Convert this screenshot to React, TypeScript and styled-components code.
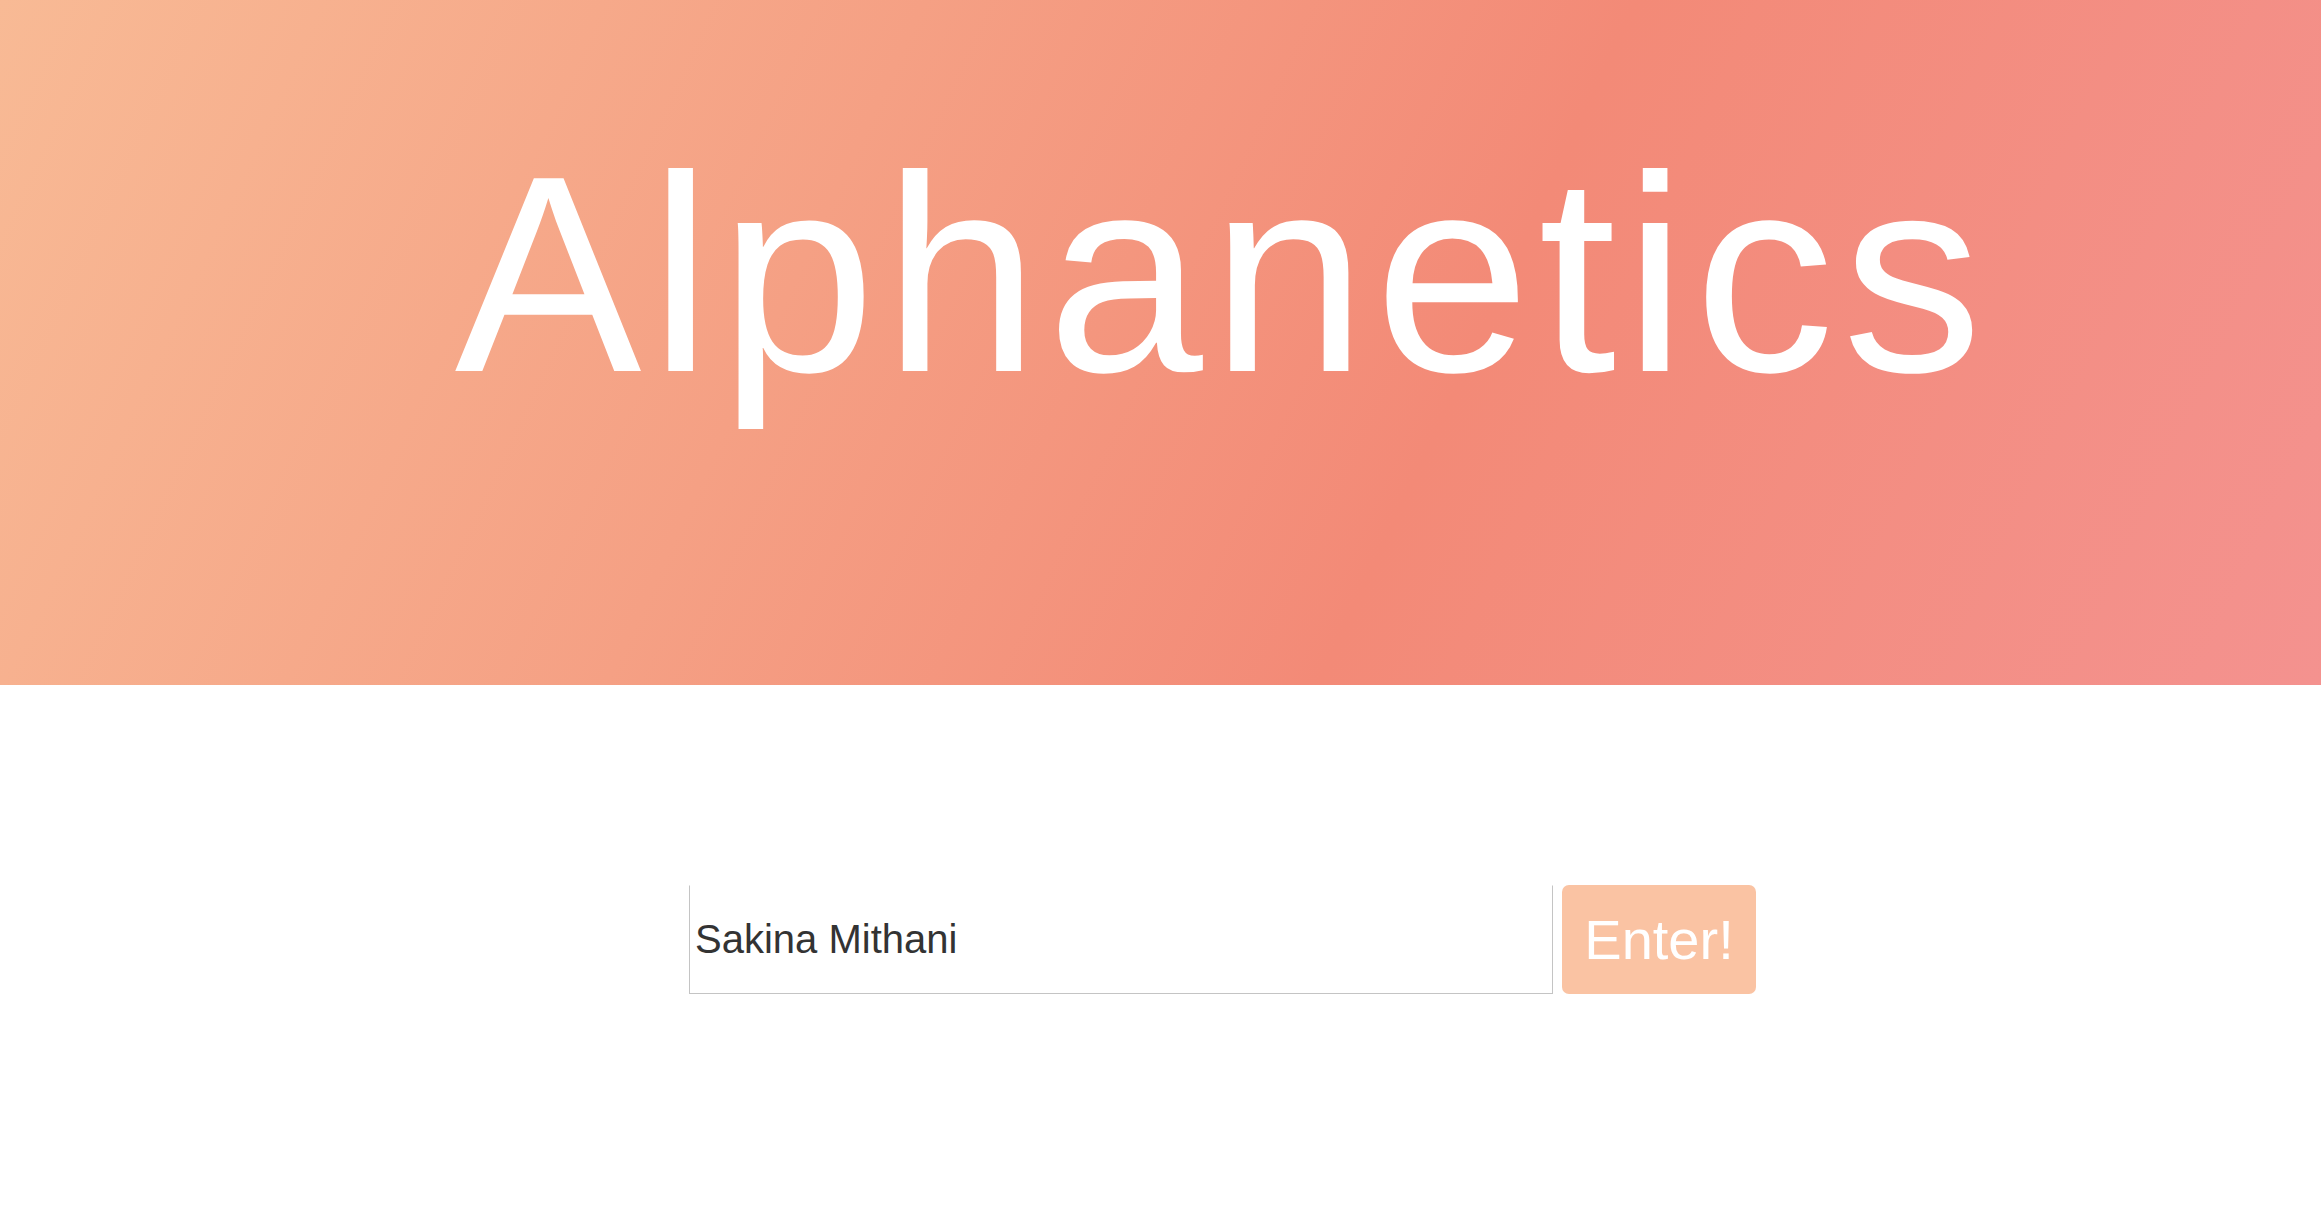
import React, { useState } from "react";
import styled, { createGlobalStyle } from "styled-components";

const Global = createGlobalStyle`
  html, body { margin: 0; padding: 0; background: #ffffff; }
  body { font-family: "Liberation Sans", Arial, Helvetica, sans-serif; }
  * { box-sizing: border-box; }
`;

const Page = styled.div`
  width: 100%;
  min-height: 1217px;
  display: flex;
  flex-direction: column;
`;

const Hero = styled.header`
  height: 685px;
  background: linear-gradient(115deg, #f8ba95 0%, #f5a084 35%, #f38a77 62%, #f4928f 100%);
  display: flex;
  justify-content: center;
  padding-left: 124px;
  padding-top: 134px;
`;

const Title = styled.h1`
  margin: 0;
  font-family: "Liberation Sans", Arial, Helvetica, sans-serif;
  font-weight: 400;
  font-size: 280px;
  line-height: 1;
  letter-spacing: 8px;
  color: #ffffff;
`;

const Form = styled.form`
  display: flex;
  justify-content: center;
  gap: 9px;
  padding-left: 124px;
  margin-top: 200px;
`;

const NameInput = styled.input`
  width: 864px;
  height: 109px;
  border: 1px solid #c4c4c4;
  border-top-color: transparent;
  border-radius: 0;
  padding: 0 0 0 5px;
  font-family: "Liberation Sans", Arial, Helvetica, sans-serif;
  font-size: 40px;
  color: #333333;
  outline: none;
  background: #ffffff;
`;

const EnterButton = styled.button`
  width: 194px;
  height: 109px;
  border: none;
  border-radius: 7px;
  background: #fac3a3;
  color: #ffffff;
  font-family: "Liberation Sans", Arial, Helvetica, sans-serif;
  font-size: 56px;
  padding: 0;
  cursor: pointer;
`;

export default function App() {
  const [name, setName] = useState("Sakina Mithani");
  return (
    <Page>
      <Global />
      <Hero>
        <Title>Alphanetics</Title>
      </Hero>
      <Form onSubmit={(e) => e.preventDefault()}>
        <NameInput value={name} onChange={(e) => setName(e.target.value)} />
        <EnterButton type="submit">Enter!</EnterButton>
      </Form>
    </Page>
  );
}
